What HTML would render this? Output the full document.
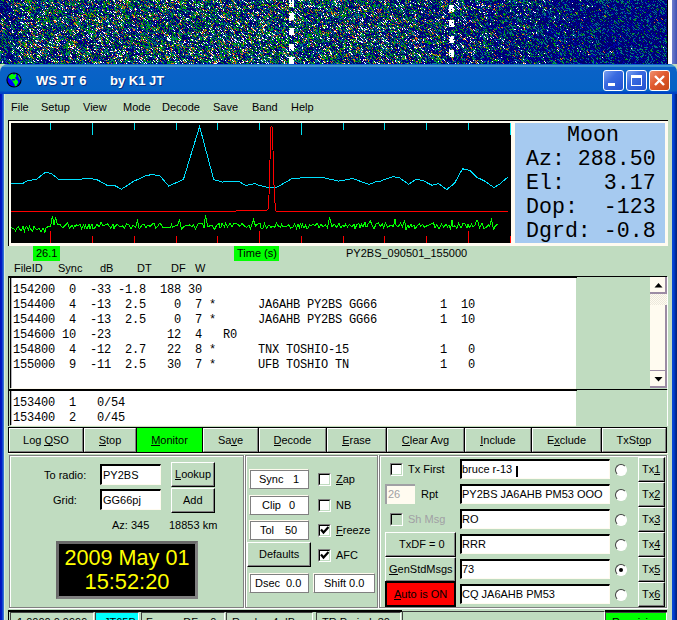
<!DOCTYPE html>
<html><head><meta charset="utf-8"><style>
*{box-sizing:border-box}
html,body{margin:0;padding:0}
body{width:677px;height:620px;overflow:hidden;position:relative;background:#C0DCC0;font-family:"Liberation Sans",sans-serif;font-size:11px;color:#000}
.a{position:absolute}
.t{position:absolute;white-space:pre;line-height:11px}
.mono{font-family:"Liberation Mono",monospace}
.b1{position:absolute;border:1px solid #000;background:#C0DCC0}
.b1::before{content:"";position:absolute;left:0;top:0;right:0;bottom:0;border-top:1px solid #fff;border-left:1px solid #fff;border-right:1px solid #808080;border-bottom:1px solid #808080}
.b2{position:absolute;border-top:1px solid #fff;border-left:1px solid #fff;border-right:1px solid #000;border-bottom:1px solid #000;background:#C0DCC0}
.b2::before{content:"";position:absolute;left:0;top:0;right:0;bottom:0;border-right:1px solid #808080;border-bottom:1px solid #808080}
.lbl{position:absolute;left:0;right:0;text-align:center;white-space:pre;line-height:11px}
.sunk{position:absolute;background:#fff;border-top:1px solid #FFFBF0;border-left:1px solid #FFFBF0;border-right:1px solid #808080;border-bottom:1px solid #808080}
.sunk::before{content:"";position:absolute;left:0;top:0;right:0;bottom:0;border-top:1px solid #808080;border-left:1px solid #808080}
.tb{position:absolute;background:#fff;border-top:2px solid #000;border-left:2px solid #000;border-right:1px solid #FFFBF0;border-bottom:1px solid #FFFBF0}
.chk{position:absolute;width:13px;height:13px;background:#fff;border-top:1px solid #808080;border-left:1px solid #808080;border-right:1px solid #fff;border-bottom:1px solid #fff}
.chk::before{content:"";position:absolute;left:0;top:0;right:0;bottom:0;border-top:1px solid #000;border-left:1px solid #000;border-right:1px solid #C0DCC0;border-bottom:1px solid #C0DCC0}
u{text-decoration:none;position:relative}
u::after{content:"";position:absolute;left:0;right:0;bottom:0px;height:1px;background:#000}
</style></head><body>
<div class="a" style="left:0;top:0;width:667px;height:64px;background:linear-gradient(90deg,#12346e 0,#275166 18px,#275166 320px,#234868 450px,#0f2d75 600px,#011a7a 667px)"></div>
<div class="a" style="left:289px;top:0px;width:5px;height:7px;background:rgba(255,255,255,0.9);"></div>
<div class="a" style="left:289px;top:13px;width:5px;height:7px;background:rgba(255,255,255,0.9);"></div>
<div class="a" style="left:289px;top:28px;width:5px;height:7px;background:rgba(255,255,255,0.9);"></div>
<div class="a" style="left:289px;top:44px;width:5px;height:7px;background:rgba(255,255,255,0.9);"></div>
<div class="a" style="left:289px;top:57px;width:5px;height:7px;background:rgba(255,255,255,0.9);"></div>
<div class="a" style="left:449px;top:5px;width:5px;height:7px;background:rgba(255,255,255,0.9);"></div>
<div class="a" style="left:449px;top:20px;width:5px;height:7px;background:rgba(255,255,255,0.9);"></div>
<div class="a" style="left:449px;top:36px;width:5px;height:7px;background:rgba(255,255,255,0.9);"></div>
<div class="a" style="left:449px;top:50px;width:5px;height:7px;background:rgba(255,255,255,0.9);"></div>
<canvas id="wf" width="667" height="64" class="a" style="left:0;top:0;width:667px;height:64px"></canvas>
<div class="a" style="left:667px;top:0px;width:1px;height:64px;background:#000;"></div>
<div class="a" style="left:668px;top:0px;width:4px;height:64px;background:#fff;"></div>
<div class="a" style="left:672px;top:0px;width:5px;height:64px;background:linear-gradient(90deg,#7080d0,#4050b0);"></div>
<div class="a" style="left:0;top:64px;width:677px;height:30px;background:linear-gradient(#1060d0 0,#1060d0 1px,#48a0d0 1px,#3890d0 3px,#0a62c8 3px,#0562c4 27px,#0048c8 28px,#0040c0 30px);border-top-left-radius:8px 8px;border-top-right-radius:8px 8px"></div>
<svg class="a" style="left:6px;top:72px" width="16" height="16" viewBox="0 0 16 16">
<defs><clipPath id="gc"><circle cx="8" cy="8" r="6.5"/></clipPath></defs><circle cx="8" cy="8" r="7.6" fill="#000"/><circle cx="8" cy="8" r="6.5" fill="#0000ff"/><g clip-path="url(#gc)">
<path d="M5 1.3 L7 1.3 L7 2.6 L9 2.6 L9 1.3 L10.2 1.5 L10.2 5 L9.2 5 L9.6 7 L11 8 L12 9.2 L12.2 11 L11 12.2 L10.5 14.8 L9 14.8 L8.6 12.5 L7.5 11 L6.5 9.2 L5 7.6 L3 6.2 L2 4.2 L2.2 3 L4 2 Z" fill="#00ff00"/>
<path d="M6 7 L9 7 L9 8.6 L6 8.6 Z" fill="#0000ff"/>
<path d="M12 2.2 L13.6 3.2 L14.8 5.4 L15 8 L14 8 L13 6 L12 4 Z" fill="#00ff00"/></g>
</svg>
<div class="t" style="left:36px;top:74px;font-size:13px;font-weight:bold;color:#fff;text-shadow:1px 1px 0 #0a3080;letter-spacing:0px;line-height:14px">WS JT 6</div>
<div class="t" style="left:110px;top:74px;font-size:13px;font-weight:bold;color:#fff;text-shadow:1px 1px 0 #0a3080;letter-spacing:0px;line-height:14px">by K1 JT</div>
<div class="a" style="left:603px;top:70px;width:21px;height:21px;border:1px solid #fff;border-radius:3px;background:linear-gradient(135deg,#7aa0f0 0%,#3a6ae0 40%,#2050d0 100%)"></div>
<div class="a" style="left:626px;top:70px;width:21px;height:21px;border:1px solid #fff;border-radius:3px;background:linear-gradient(135deg,#7aa0f0 0%,#3a6ae0 40%,#2050d0 100%)"></div>
<div class="a" style="left:649px;top:70px;width:21px;height:21px;border:1px solid #fff;border-radius:3px;background:linear-gradient(135deg,#f09070 0%,#e05a30 45%,#c84818 100%)"></div>
<div class="a" style="left:608px;top:83px;width:7px;height:3px;background:#fff;"></div>
<div class="a" style="left:631px;top:75px;width:11px;height:11px;border:1px solid #fff;border-top-width:3px"></div>
<svg class="a" style="left:649px;top:70px" width="21" height="21"><path d="M6 6 L15 15 M15 6 L6 15" stroke="#fff" stroke-width="2.4"/></svg>
<div class="a" style="left:0px;top:94px;width:4px;height:526px;background:linear-gradient(90deg,#0010b8 0,#0020c8 2px,#2868d8 3px,#3878d0 4px);"></div>
<div class="a" style="left:4px;top:94px;width:1px;height:526px;background:#d8ecd8;"></div>
<div class="a" style="left:672px;top:94px;width:5px;height:526px;background:linear-gradient(90deg,#0848d8 0,#0040d0 2px,#0030a8 3px,#002070 5px);"></div>
<div class="t" style="left:11px;top:102px;">File</div>
<div class="t" style="left:41px;top:102px;">Setup</div>
<div class="t" style="left:83px;top:102px;">View</div>
<div class="t" style="left:123px;top:102px;">Mode</div>
<div class="t" style="left:162px;top:102px;">Decode</div>
<div class="t" style="left:213px;top:102px;">Save</div>
<div class="t" style="left:252px;top:102px;">Band</div>
<div class="t" style="left:291px;top:102px;">Help</div>
<div class="a" style="left:8px;top:120px;width:660px;height:126px;background:#FFFBF0;border-top:1px solid #000;border-left:1px solid #000"></div>
<div class="a" style="left:11px;top:123px;width:500px;height:120px;background:#000;"></div>
<div class="a" style="left:515px;top:123px;width:150px;height:120px;background:#A6CAF0;"></div>
<svg class="a" style="left:11px;top:123px" width="500" height="120"><rect x="39" y="0" width="1" height="7" fill="#00E0F0"/><rect x="39" y="108" width="1" height="12" fill="#FF0000"/><rect x="81" y="0" width="1" height="12" fill="#00E0F0"/><rect x="81" y="113" width="1" height="7" fill="#FF0000"/><rect x="123" y="0" width="1" height="7" fill="#00E0F0"/><rect x="123" y="113" width="1" height="7" fill="#FF0000"/><rect x="165" y="0" width="1" height="7" fill="#00E0F0"/><rect x="165" y="113" width="1" height="7" fill="#FF0000"/><rect x="206" y="0" width="1" height="7" fill="#00E0F0"/><rect x="206" y="113" width="1" height="7" fill="#FF0000"/><rect x="248" y="0" width="1" height="7" fill="#00E0F0"/><rect x="248" y="108" width="1" height="12" fill="#FF0000"/><rect x="290" y="0" width="1" height="12" fill="#00E0F0"/><rect x="290" y="113" width="1" height="7" fill="#FF0000"/><rect x="332" y="0" width="1" height="7" fill="#00E0F0"/><rect x="332" y="113" width="1" height="7" fill="#FF0000"/><rect x="373" y="0" width="1" height="7" fill="#00E0F0"/><rect x="373" y="113" width="1" height="7" fill="#FF0000"/><rect x="415" y="0" width="1" height="7" fill="#00E0F0"/><rect x="415" y="113" width="1" height="7" fill="#FF0000"/><rect x="457" y="0" width="1" height="7" fill="#00E0F0"/><rect x="457" y="108" width="1" height="12" fill="#FF0000"/><rect x="499" y="0" width="1" height="12" fill="#00E0F0"/><rect x="499" y="113" width="1" height="7" fill="#FF0000"/><polyline points="0.0,60.5 11.5,60.5 17.0,57.5 25.2,56.5 34.3,49.4 40.3,50.4 48.4,57.0 52.4,56.5 75.6,55.9 78.6,55.5 85.7,56.5 95.8,62.1 102.8,62.1 110.5,66.2 124.0,57.5 127.0,56.5 134.1,53.0 141.2,51.4 149.2,53.0 157.7,63.1 172.4,56.5 188.6,3.5 202.7,56.5 205.7,57.5 211.7,59.1 215.8,58.5 227.9,58.5 234.9,62.5 244.0,60.5 247.0,62.0 257.1,64.5 265.2,64.5 281.3,55.5 297.5,54.5 311.6,54.5 327.7,58.1 341.8,55.5 358.0,61.5 364.0,59.1 369.7,58.0 381.5,53.7 387.9,54.4 397.5,61.2 405.0,56.5 411.5,57.4 421.1,62.3 427.5,60.6 435.7,66.6 443.6,60.2 451.5,45.8 458.6,47.3 466.1,54.4 473.6,58.0 482.8,64.5 488.6,61.2 496.5,54.4" fill="none" stroke="#00E0FF" stroke-width="1" shape-rendering="crispEdges"/><polyline points="0.0,88.0 225.0,88.0 229.0,87.3 235.0,87.0 239.0,87.5 255.0,88.0 257.0,86.5 258.0,72.0 259.0,37.0 260.0,4.0 261.0,3.5 262.0,27.0 263.0,62.0 264.0,80.0 265.0,88.0 266.0,88.5 497.0,88.5" fill="none" stroke="#FF0000" stroke-width="1" shape-rendering="crispEdges"/><polyline points="0.0,104.6 2.0,105.2 4.5,107.8 6.5,104.1 7.5,104.0 10.0,108.2 11.0,105.9 12.0,103.4 13.5,107.9 14.5,104.1 15.5,103.5 17.5,106.6 18.5,103.3 19.5,105.9 21.5,108.5 23.0,103.3 25.0,106.3 26.5,106.2 28.5,105.3 30.0,109.3 32.0,105.2 34.0,109.4 35.0,104.9 37.5,103.3 39.5,103.6 41.5,93.0 43.0,102.3 44.5,94.0 46.5,101.5 49.0,101.4 51.5,104.8 54.0,102.7 56.5,99.8 58.5,105.2 61.0,102.6 62.5,104.9 63.5,102.8 64.5,103.4 65.5,101.9 67.0,102.9 69.0,101.4 70.5,105.7 72.5,101.8 73.5,105.0 74.5,102.5 76.0,106.1 78.0,101.2 79.0,105.6 81.0,100.7 82.0,105.9 84.0,104.8 86.0,101.6 88.5,103.7 90.0,99.5 92.0,103.0 94.5,101.5 96.5,100.9 98.5,103.7 100.0,105.3 102.0,101.4 103.0,106.0 104.5,102.3 106.5,101.7 109.0,103.6 111.5,102.9 113.5,105.1 115.5,100.6 117.0,101.3 118.0,101.8 120.0,106.1 122.0,102.4 124.5,104.5 126.5,98.0 128.0,104.9 129.0,105.2 131.0,101.8 133.0,101.6 135.0,104.8 136.0,102.9 138.0,101.9 139.0,103.4 141.5,101.1 143.0,99.8 144.5,105.1 146.5,103.8 148.5,100.3 149.5,100.7 152.0,105.0 154.5,104.4 157.0,104.6 159.5,104.1 160.5,101.6 161.5,104.4 164.0,102.9 166.5,102.3 168.5,97.0 170.5,106.4 173.0,103.5 175.0,102.8 176.5,102.8 178.5,102.0 181.0,103.7 182.5,101.7 184.5,105.6 187.0,101.1 189.5,100.5 191.5,100.1 193.0,104.9 194.5,92.0 196.5,103.0 198.0,104.1 199.0,102.5 201.0,102.3 203.5,106.5 205.5,102.7 208.0,100.4 209.0,104.6 210.0,104.1 211.0,100.4 213.5,103.7 214.5,99.9 216.5,103.8 219.0,100.3 221.0,104.1 223.0,100.2 224.5,100.5 227.0,101.5 229.0,103.3 231.0,100.5 233.5,103.1 235.5,104.5 238.0,102.4 239.5,105.6 240.5,102.9 242.5,97.0 244.5,102.9 246.5,101.3 249.0,99.8 250.0,105.1 252.0,105.0 253.5,100.6 255.5,105.5 258.0,101.9 260.0,104.3 262.0,103.1 263.5,104.7 265.5,99.9 267.5,103.2 269.5,104.5 270.5,100.8 272.0,104.1 274.0,103.0 275.5,103.6 277.5,101.4 279.5,105.3 281.5,104.6 283.5,101.0 285.5,105.3 287.0,101.6 288.5,104.9 289.5,100.1 290.5,104.1 291.5,101.6 293.0,104.7 294.5,101.8 295.5,105.2 297.0,105.0 298.5,102.0 300.5,102.4 302.0,101.3 304.0,102.8 306.0,100.6 307.0,101.8 308.0,105.1 310.0,101.2 312.0,103.5 314.5,102.0 316.5,105.1 318.5,94.0 321.0,103.7 323.0,101.1 325.5,104.1 328.0,100.6 330.0,104.8 331.5,102.2 333.5,103.6 334.5,101.3 336.5,103.9 338.5,101.5 341.0,104.1 343.0,101.0 344.0,105.9 346.0,101.2 348.0,100.6 349.0,105.2 350.5,101.3 352.0,103.9 354.0,99.4 355.0,103.4 356.0,104.2 357.0,101.2 359.5,98.0 361.0,102.3 363.0,105.8 365.0,101.2 367.5,99.9 369.5,103.4 371.5,100.8 372.5,104.5 374.5,100.3 376.5,104.2 378.5,103.1 380.0,102.1 382.5,103.7 384.0,96.0 385.0,102.0 387.0,104.2 389.5,100.1 391.5,104.2 393.5,97.0 395.0,106.6 397.0,102.0 398.0,104.6 400.0,101.5 401.0,104.0 403.0,102.2 404.0,106.1 406.5,102.5 408.5,100.8 409.5,103.4 411.5,101.4 413.5,104.2 416.0,102.7 417.5,102.9 418.5,101.4 420.5,100.8 422.5,99.7 424.0,105.1 426.0,101.6 428.0,106.3 430.5,100.8 432.5,104.2 435.0,101.4 436.5,104.1 438.0,101.8 439.5,105.8 441.0,97.0 442.0,103.7 444.0,102.7 446.0,105.4 447.5,100.5 450.0,104.9 452.0,100.4 454.0,100.7 456.0,104.8 457.0,101.3 458.5,104.5 460.5,101.4 462.0,103.8 464.0,102.1 465.5,97.0 466.5,97.0 468.5,104.8 471.0,100.5 473.0,105.6 475.0,104.6 477.5,101.8 478.5,103.3 480.5,97.0 482.5,106.3 484.5,102.8 486.5,101.0" fill="none" stroke="#00FF00" stroke-width="1" shape-rendering="crispEdges"/></svg>
<div class="t mono" style="left:567px;top:123px;font-size:21.6px;line-height:24px">Moon</div>
<div class="t mono" style="left:526px;top:147px;font-size:21.6px;line-height:24px">Az: 288.50</div>
<div class="t mono" style="left:526px;top:171px;font-size:21.6px;line-height:24px">El:   3.17</div>
<div class="t mono" style="left:526px;top:195px;font-size:21.6px;line-height:24px">Dop:  -123</div>
<div class="t mono" style="left:526px;top:219px;font-size:21.6px;line-height:24px">Dgrd: -0.8</div>
<div class="a" style="left:33px;top:246px;width:27px;height:15px;background:#00FF00;"></div>
<div class="t" style="left:36px;top:248px;">26.1</div>
<div class="a" style="left:234px;top:246px;width:45px;height:15px;background:#00FF00;"></div>
<div class="t" style="left:237px;top:248px;">Time (s)</div>
<div class="t" style="left:346px;top:248px;">PY2BS_090501_155000</div>
<div class="t" style="left:14px;top:263px;">FileID</div>
<div class="t" style="left:58px;top:263px;">Sync</div>
<div class="t" style="left:100px;top:263px;">dB</div>
<div class="t" style="left:137px;top:263px;">DT</div>
<div class="t" style="left:171px;top:263px;">DF</div>
<div class="t" style="left:195px;top:263px;">W</div>
<div class="a" style="left:8px;top:276px;width:569px;height:2px;background:#000;"></div>
<div class="a" style="left:576px;top:276px;width:91px;height:1px;background:#000;"></div>
<div class="a" style="left:8px;top:276px;width:1px;height:113px;background:#101010;"></div>
<div class="a" style="left:9px;top:278px;width:1px;height:110px;background:#C0DCC0;"></div>
<div class="a" style="left:10px;top:278px;width:1px;height:110px;background:#000;"></div>
<div class="a" style="left:11px;top:278px;width:565px;height:110px;background:#fff;"></div>
<div class="a" style="left:11px;top:388px;width:565px;height:1px;background:#FFFBF0;"></div>
<div class="a" style="left:11px;top:278px;width:1px;height:110px;background:#B4B4B8;"></div>
<pre class="a mono" style="left:13px;top:283px;margin:0;font-size:12px;letter-spacing:-0.2px;line-height:15px">154200  0  -33 -1.8  188 30
154400  4  -13  2.5    0  7 *      JA6AHB PY2BS GG66         1  10
154400  4  -13  2.5    0  7 *      JA6AHB PY2BS GG66         1  10
154600 10  -23        12  4   R0
154800  4  -12  2.7   22  8 *      TNX TOSHIO-15             1   0
155000  9  -11  2.5   30  7 *      UFB TOSHIO TN             1   0</pre>
<div class="a" style="left:8px;top:389px;width:569px;height:2px;background:#000;"></div>
<div class="a" style="left:576px;top:389px;width:91px;height:1px;background:#000;"></div>
<div class="a" style="left:8px;top:389px;width:1px;height:37px;background:#101010;"></div>
<div class="a" style="left:9px;top:391px;width:1px;height:34px;background:#C0DCC0;"></div>
<div class="a" style="left:10px;top:391px;width:1px;height:34px;background:#000;"></div>
<div class="a" style="left:11px;top:391px;width:565px;height:34px;background:#fff;"></div>
<div class="a" style="left:11px;top:425px;width:565px;height:1px;background:#FFFBF0;"></div>
<div class="a" style="left:11px;top:391px;width:1px;height:34px;background:#B4B4B8;"></div>
<pre class="a mono" style="left:13px;top:396px;margin:0;font-size:12px;letter-spacing:-0.2px;line-height:15px">153400  1   0/54
153400  2   0/45</pre>
<div class="a" style="left:667px;top:277px;width:1px;height:112px;background:#fff;"></div>
<div class="a" style="left:667px;top:390px;width:1px;height:36px;background:#fff;"></div>
<div class="a" style="left:650px;top:277px;width:17px;height:17px;background:#FFFBF0;border-right:2px solid #9C8CA4;border-bottom:2px solid #9C8CA4"></div>
<svg class="a" style="left:650px;top:277px" width="17" height="17"><path d="M4.5 10.5 L12.5 10.5 L8.5 6 Z" fill="#000"/></svg>
<div class="a" style="left:650px;top:294px;width:17px;height:11px;background:repeating-conic-gradient(#FFFBF0 0 25%,#ece8dc 0 50%) 0 0/2px 2px"></div>
<div class="a" style="left:650px;top:305px;width:17px;height:66px;background:#FFFBF0;border-right:2px solid #9C8CA4;border-bottom:1px solid #9C8CA4"></div>
<div class="a" style="left:650px;top:371px;width:17px;height:17px;background:#FFFBF0;border-right:2px solid #9C8CA4;border-bottom:2px solid #9C8CA4"></div>
<svg class="a" style="left:650px;top:371px" width="17" height="17"><path d="M4.5 6 L12.5 6 L8.5 10.5 Z" fill="#000"/></svg>
<div class="b1" style="left:8px;top:427px;width:76px;height:26px"><div class="lbl" style="top:7px">Log <u>Q</u>SO</div></div>
<div class="b1" style="left:83px;top:427px;width:54px;height:26px"><div class="lbl" style="top:7px"><u>S</u>top</div></div>
<div class="a" style="left:136px;top:427px;width:67px;height:26px;border:1px solid #000;background:#00FF00"><div class="lbl" style="top:7px"><u>M</u>onitor</div></div>
<div class="b1" style="left:202px;top:427px;width:57px;height:26px"><div class="lbl" style="top:7px">Sa<u>v</u>e</div></div>
<div class="b1" style="left:258px;top:427px;width:69px;height:26px"><div class="lbl" style="top:7px"><u>D</u>ecode</div></div>
<div class="b1" style="left:326px;top:427px;width:61px;height:26px"><div class="lbl" style="top:7px"><u>E</u>rase</div></div>
<div class="b1" style="left:386px;top:427px;width:79px;height:26px"><div class="lbl" style="top:7px"><u>C</u>lear Avg</div></div>
<div class="b1" style="left:464px;top:427px;width:68px;height:26px"><div class="lbl" style="top:7px"><u>I</u>nclude</div></div>
<div class="b1" style="left:531px;top:427px;width:71px;height:26px"><div class="lbl" style="top:7px">E<u>x</u>clude</div></div>
<div class="b1" style="left:601px;top:427px;width:66px;height:26px"><div class="lbl" style="top:7px">TxSt<u>o</u>p</div></div>
<div class="a" style="left:8px;top:453px;width:660px;height:1px;background:#FFFBF0;"></div>
<div class="a" style="left:9px;top:455px;width:236px;height:1px;background:#808080;"></div>
<div class="a" style="left:9px;top:455px;width:1px;height:154px;background:#808080;"></div>
<div class="a" style="left:10px;top:456px;width:234px;height:1px;background:#fff;"></div>
<div class="a" style="left:10px;top:456px;width:1px;height:152px;background:#fff;"></div>
<div class="a" style="left:10px;top:607px;width:234px;height:1px;background:#808080;"></div>
<div class="a" style="left:243px;top:456px;width:1px;height:152px;background:#808080;"></div>
<div class="a" style="left:9px;top:608px;width:236px;height:1px;background:#fff;"></div>
<div class="a" style="left:244px;top:455px;width:1px;height:154px;background:#fff;"></div>
<div class="a" style="left:245px;top:455px;width:134px;height:1px;background:#808080;"></div>
<div class="a" style="left:245px;top:455px;width:1px;height:154px;background:#808080;"></div>
<div class="a" style="left:246px;top:456px;width:132px;height:1px;background:#fff;"></div>
<div class="a" style="left:246px;top:456px;width:1px;height:152px;background:#fff;"></div>
<div class="a" style="left:246px;top:607px;width:132px;height:1px;background:#808080;"></div>
<div class="a" style="left:377px;top:456px;width:1px;height:152px;background:#808080;"></div>
<div class="a" style="left:245px;top:608px;width:134px;height:1px;background:#fff;"></div>
<div class="a" style="left:378px;top:455px;width:1px;height:154px;background:#fff;"></div>
<div class="a" style="left:379px;top:455px;width:289px;height:1px;background:#808080;"></div>
<div class="a" style="left:379px;top:455px;width:1px;height:154px;background:#808080;"></div>
<div class="a" style="left:380px;top:456px;width:287px;height:1px;background:#fff;"></div>
<div class="a" style="left:380px;top:456px;width:1px;height:152px;background:#fff;"></div>
<div class="a" style="left:380px;top:607px;width:287px;height:1px;background:#808080;"></div>
<div class="a" style="left:666px;top:456px;width:1px;height:152px;background:#808080;"></div>
<div class="a" style="left:379px;top:608px;width:289px;height:1px;background:#fff;"></div>
<div class="a" style="left:667px;top:455px;width:1px;height:154px;background:#fff;"></div>
<div class="t" style="left:44px;top:470px;">To radio:</div>
<div class="t" style="left:53px;top:495px;">Grid:</div>
<div class="tb" style="left:100px;top:464px;width:61px;height:21px"></div>
<div class="t" style="left:103px;top:470px;">PY2BS</div>
<div class="tb" style="left:100px;top:489px;width:61px;height:21px"></div>
<div class="t" style="left:103px;top:495px;">GG66pj</div>
<div class="b2" style="left:171px;top:462px;width:44px;height:25px"></div>
<div class="t" style="left:175px;top:469px;"><u>L</u>ookup</div>
<div class="b2" style="left:171px;top:488px;width:44px;height:25px"></div>
<div class="t" style="left:183px;top:495px;">Add</div>
<div class="t" style="left:112px;top:520px;">Az: 345</div>
<div class="t" style="left:169px;top:520px;">18853 km</div>
<div class="a" style="left:56px;top:541px;width:142px;height:58px;background:#000;border:3px solid #808080;border-top-color:#6a6a6a;border-left-color:#6a6a6a"></div>
<div class="t" style="left:56px;top:547px;width:142px;text-align:center;font-size:21.6px;line-height:22px;color:#FFFF00">2009 May 01</div>
<div class="t" style="left:56px;top:571px;width:142px;text-align:center;font-size:21.8px;line-height:22px;color:#FFFF00">15:52:20</div>
<div class="sunk" style="left:249px;top:469px;width:60px;height:20px"></div>
<div class="t" style="left:259px;top:474px;">Sync</div>
<div class="t" style="left:293px;top:474px;">1</div>
<div class="sunk" style="left:249px;top:495px;width:60px;height:20px"></div>
<div class="t" style="left:262px;top:500px;">Clip</div>
<div class="t" style="left:289px;top:500px;">0</div>
<div class="sunk" style="left:249px;top:520px;width:60px;height:20px"></div>
<div class="t" style="left:260px;top:525px;">Tol</div>
<div class="t" style="left:285px;top:525px;">50</div>
<div class="b2" style="left:247px;top:542px;width:64px;height:25px"></div>
<div class="t" style="left:259px;top:549px;">Defaults</div>
<div class="sunk" style="left:249px;top:573px;width:60px;height:20px"></div>
<div class="t" style="left:255px;top:578px;">Dsec</div>
<div class="t" style="left:286px;top:578px;">0.0</div>
<div class="sunk" style="left:313px;top:573px;width:62px;height:20px"></div>
<div class="t" style="left:324px;top:578px;">Shift 0.0</div>
<div class="chk" style="left:318px;top:473px"></div>
<div class="t" style="left:336px;top:474px;"><u>Z</u>ap</div>
<div class="chk" style="left:318px;top:499px"></div>
<div class="t" style="left:336px;top:500px;">NB</div>
<div class="chk" style="left:318px;top:524px"></div>
<div class="t" style="left:336px;top:525px;"><u>F</u>reeze</div>
<svg class="a" style="left:318px;top:524px" width="13" height="13"><path d="M3 5.5 L5.5 8.5 L10.5 3" stroke="#000" stroke-width="2.2" fill="none"/></svg>
<div class="chk" style="left:318px;top:549px"></div>
<div class="t" style="left:336px;top:550px;">AFC</div>
<svg class="a" style="left:318px;top:549px" width="13" height="13"><path d="M3 5.5 L5.5 8.5 L10.5 3" stroke="#000" stroke-width="2.2" fill="none"/></svg>
<div class="chk" style="left:390px;top:463px"></div>
<div class="t" style="left:408px;top:464px;">Tx First</div>
<div class="a" style="left:385px;top:484px;width:30px;height:20px;background:#FFFBF0;border-top:2px solid #A0A0A4;border-left:2px solid #A0A0A4"></div>
<div class="t" style="left:388px;top:489px;color:#A0A0A4">26</div>
<div class="t" style="left:421px;top:489px;">Rpt</div>
<div class="chk" style="left:390px;top:513px;background:#C0DCC0"></div>
<div class="t" style="left:408px;top:514px;color:#A0A0A4">Sh Msg</div>
<div class="b2" style="left:385px;top:532px;width:71px;height:25px"></div>
<div class="t" style="left:399px;top:539px;">TxDF = 0</div>
<div class="b2" style="left:385px;top:557px;width:71px;height:25px"></div>
<div class="t" style="left:389px;top:564px;"><u>G</u>enStdMsgs</div>
<div class="a" style="left:385px;top:581px;width:71px;height:26px;background:#FF0000;border:2px solid #000"></div>
<div class="t" style="left:394px;top:589px;"><u>A</u>uto is ON</div>
<div class="tb" style="left:460px;top:459px;width:150px;height:20px"></div>
<div class="t" style="left:462px;top:464px;">bruce r-13</div>
<div class="a" style="left:615px;top:464px;width:12px;height:12px;border-radius:50%;background:#fff;border:1px solid;border-color:#404040 #fff #fff #404040"></div>
<div class="b2" style="left:638px;top:457px;width:27px;height:25px"></div>
<div class="t" style="left:642px;top:464px;">Tx<u>1</u></div>
<div class="tb" style="left:460px;top:484px;width:150px;height:20px"></div>
<div class="t" style="left:462px;top:489px;">PY2BS JA6AHB PM53 OOO</div>
<div class="a" style="left:615px;top:489px;width:12px;height:12px;border-radius:50%;background:#fff;border:1px solid;border-color:#404040 #fff #fff #404040"></div>
<div class="b2" style="left:638px;top:482px;width:27px;height:25px"></div>
<div class="t" style="left:642px;top:489px;">Tx<u>2</u></div>
<div class="tb" style="left:460px;top:509px;width:150px;height:20px"></div>
<div class="t" style="left:462px;top:514px;">RO</div>
<div class="a" style="left:615px;top:514px;width:12px;height:12px;border-radius:50%;background:#fff;border:1px solid;border-color:#404040 #fff #fff #404040"></div>
<div class="b2" style="left:638px;top:507px;width:27px;height:25px"></div>
<div class="t" style="left:642px;top:514px;">Tx<u>3</u></div>
<div class="tb" style="left:460px;top:534px;width:150px;height:20px"></div>
<div class="t" style="left:462px;top:539px;">RRR</div>
<div class="a" style="left:615px;top:539px;width:12px;height:12px;border-radius:50%;background:#fff;border:1px solid;border-color:#404040 #fff #fff #404040"></div>
<div class="b2" style="left:638px;top:532px;width:27px;height:25px"></div>
<div class="t" style="left:642px;top:539px;">Tx<u>4</u></div>
<div class="tb" style="left:460px;top:559px;width:150px;height:20px"></div>
<div class="t" style="left:462px;top:564px;">73</div>
<div class="a" style="left:615px;top:564px;width:12px;height:12px;border-radius:50%;background:#fff;border:1px solid;border-color:#404040 #fff #fff #404040"></div>
<div class="b2" style="left:638px;top:557px;width:27px;height:25px"></div>
<div class="t" style="left:642px;top:564px;">Tx<u>5</u></div>
<div class="tb" style="left:460px;top:584px;width:150px;height:20px"></div>
<div class="t" style="left:462px;top:589px;">CQ JA6AHB PM53</div>
<div class="a" style="left:615px;top:589px;width:12px;height:12px;border-radius:50%;background:#fff;border:1px solid;border-color:#404040 #fff #fff #404040"></div>
<div class="b2" style="left:638px;top:582px;width:27px;height:25px"></div>
<div class="t" style="left:642px;top:589px;">Tx<u>6</u></div>
<div class="a" style="left:516px;top:466px;width:2px;height:11px;background:#000;"></div>
<div class="a" style="left:619px;top:568px;width:4px;height:4px;border-radius:50%;background:#000"></div>
<div class="a" style="left:8px;top:610px;width:394px;height:2px;background:#000;"></div>
<div class="a" style="left:8px;top:610px;width:1px;height:10px;background:#000;"></div>
<div class="a" style="left:605px;top:610px;width:62px;height:2px;background:#000;"></div>
<div class="a" style="left:10px;top:612px;width:84px;height:8px;background:#C0DCC0;border-left:1px solid #404040;border-top:1px solid #404040;border-right:1px solid #fff"></div>
<div class="t" style="left:17px;top:617px;">1.0000 0.9999</div>
<div class="a" style="left:95px;top:612px;width:44px;height:8px;background:#00FFFF;border-left:1px solid #404040;border-top:1px solid #404040;border-right:1px solid #fff"></div>
<div class="t" style="left:104px;top:617px;">JT65B</div>
<div class="a" style="left:141px;top:612px;width:84px;height:8px;background:#C0DCC0;border-left:1px solid #404040;border-top:1px solid #404040;border-right:1px solid #fff"></div>
<div class="t" style="left:146px;top:617px;">Freeze DF:   0</div>
<div class="a" style="left:226px;top:612px;width:87px;height:8px;background:#C0DCC0;border-left:1px solid #404040;border-top:1px solid #404040;border-right:1px solid #fff"></div>
<div class="t" style="left:232px;top:617px;">Rcvd:    4 dB</div>
<div class="a" style="left:316px;top:612px;width:85px;height:8px;background:#C0DCC0;border-left:1px solid #404040;border-top:1px solid #404040;border-right:1px solid #fff"></div>
<div class="t" style="left:322px;top:617px;">TR Period: 30</div>
<div class="a" style="left:605px;top:612px;width:62px;height:8px;background:#00FF00;border-left:1px solid #404040;border-top:1px solid #404040;border-right:1px solid #fff"></div>
<div class="t" style="left:612px;top:617px;">Receiving</div>
<div class="a" style="left:402px;top:611px;width:203px;height:9px;background:#C0DCC0;border-left:1px solid #404040;border-top:1px solid #404040;border-right:1px solid #fff"></div>
<script>
(function(){
var c=document.getElementById('wf');if(!c||!c.getContext)return;
var g=c.getContext('2d');var W=667,H=64;var im=g.createImageData(W,H);var d=im.data;
var s=987654321;function r(){s^=s<<13;s^=s>>>17;s^=s<<5;return ((s>>>0)%100000)/100000;}
var U=new Float32Array(W*H);for(var i=0;i<W*H;i++)U[i]=r();
var cols=[[0,0,110],[0,0,170],[0,120,130],[0,160,0],[230,110,20],[255,255,255]];
var hi=[0.40,0.08,0.17,0.19,0.08,0.08], lo=[0.60,0.20,0.16,0.035,0.004,0.001];
function mix(t){var o=[];for(var i=0;i<6;i++)o.push(hi[i]*(1-t)+lo[i]*t);return o;}
for(var x=0;x<W;x++){
 var t; if(x<18)t=0.45; else if(x<320)t=0; else if(x<600)t=Math.pow((x-320)/280,1.3); else t=1;
 var p=mix(t);
 for(var y=0;y<H;y++){
  var a=U[y*W+x], b=(x>0&&y>0)?U[(y-1)*W+x-1]:r();
  var u=(r()<0.25)?b:a;
  var k=0,acc=p[0];while(u>acc&&k<5){k++;acc+=p[k];}
  var q=cols[k];var i=(y*W+x)*4;d[i]=q[0];d[i+1]=q[1];d[i+2]=q[2];d[i+3]=255;}}
function dash(x0,ys){for(var j=0;j<ys.length;j++){for(var yy=ys[j];yy<ys[j]+7&&yy<H;yy++){for(var xx=x0-2;xx<=x0+2;xx++){if(r()<0.92){var i=(yy*W+xx)*4;d[i]=255;d[i+1]=255;d[i+2]=255;}}}}}
dash(291,[0,13,28,44,57]);dash(451,[5,20,36,50]);
g.putImageData(im,0,0);
})();
</script>
</body></html>
